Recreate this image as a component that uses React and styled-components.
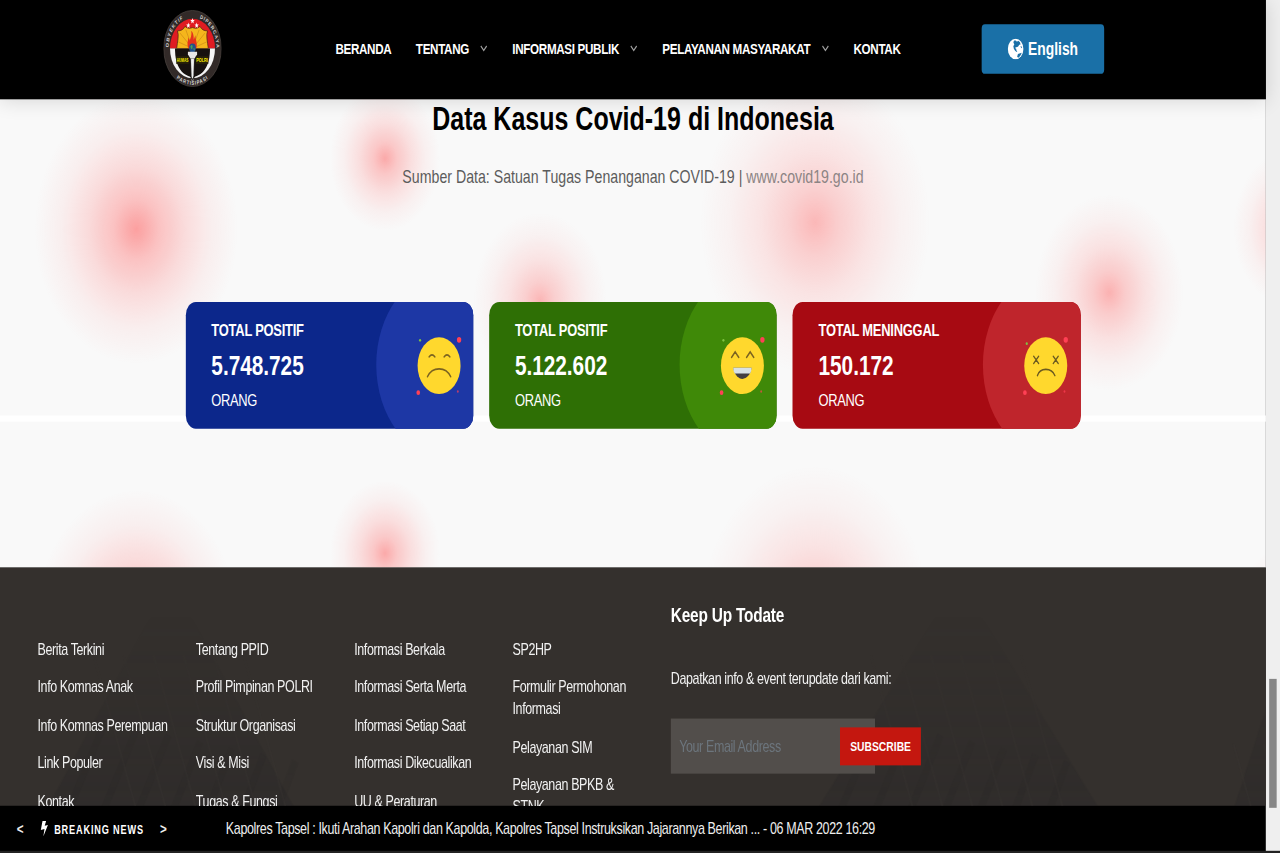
import React from "react";
import styled, { createGlobalStyle } from "styled-components";

const GlobalStyle = createGlobalStyle`
  *, *::before, *::after { box-sizing: border-box; }
  html, body { margin: 0; padding: 0; overflow: hidden; background: #222; }
  body { font-family: "Liberation Sans", Arial, sans-serif; }
`;

const Viewport = styled.div`
  width: 1280px;
  height: 853px;
  overflow: hidden;
`;

const Stage = styled.div`
  display: flex;
  width: 1536px;
  height: 774px;
  background: #222;
  transform: scale(0.83333, 1.10207);
  transform-origin: 0 0;
`;

const Page = styled.div`
  display: flex;
  flex-direction: column;
  flex: none;
  width: 1519.2px;
  height: 772.4px;
`;

const ScrollTrack = styled.div`
  flex: 1;
  height: 772.4px;
  padding: 616.3px 4px 0;
  background: #efefef;
`;

const ScrollThumb = styled.div`
  height: 116.5px;
  background: #868686;
`;

const Header = styled.header`
  position: relative;
  z-index: 2;
  display: flex;
  align-items: center;
  flex: none;
  height: 89.8px;
  padding: 0 194px 0 195.5px;
  background: #000;
  box-shadow: 0 2px 20px rgba(0, 0, 0, 0.14);
`;

const Logo = styled.svg`
  display: block;
  width: 70px;
  height: 70px;
  margin-bottom: 1px;
`;

const Nav = styled.nav`
  display: flex;
  align-items: center;
  gap: 29.4px;
  margin-left: 137px;
  padding-bottom: 1.6px;
`;

const NavItem = styled.a`
  display: flex;
  align-items: center;
  gap: 13.6px;
  color: #fff;
  font-size: 14px;
  font-weight: 700;
  line-height: 20px;
  letter-spacing: -0.41px;
  white-space: nowrap;

  svg { display: block; width: 9px; height: 8px; }
`;

const LanguageButton = styled.button`
  display: flex;
  align-items: center;
  justify-content: center;
  gap: 5px;
  width: 147.5px;
  height: 45.4px;
  margin: 0 0 1.4px auto;
  padding: 1px 0 0;
  border: 0;
  border-radius: 4px;
  background: #1a70a7;
  color: #fff;
  font: 700 16.6px/20px "Liberation Sans", Arial, sans-serif;

  svg { display: block; width: 19.5px; height: 19px; }
`;

const blob = (x, y, r, a) =>
  `radial-gradient(circle ${r}px at ${x}px ${y}px, rgba(255,50,50,${a}) 0%, rgba(255,62,62,${a * 0.66}) 22%, rgba(255,74,74,${a * 0.38}) 47%, rgba(255,84,84,${a * 0.14}) 74%, rgba(255,100,100,0) 100%)`;

const blobs = [
  [163.5, 118, 122, 0.45],
  [462, 53.6, 66, 0.4],
  [648, 183, 80, 0.34],
  [978, 112, 138, 0.33],
  [1331, 175.5, 89, 0.36],
  [1552, 117, 72, 0.36],
  [163.5, 476.4, 122, 0.45],
  [462, 412, 66, 0.4],
  [978, 470.4, 138, 0.33],
  [1552, 475.4, 72, 0.36],
];

const CovidSection = styled.section`
  display: flex;
  flex-direction: column;
  align-items: center;
  flex: none;
  height: 425px;
  background:
    linear-gradient(#fff, #fff) 0 286.8px / 100% 5.6px no-repeat,
    ${blobs.map((b) => blob(...b)).join(",")},
    #f9f9f9;
`;

const Title = styled.h2`
  margin: 0;
  color: #000;
  font-size: 30px;
  font-weight: 700;
  line-height: 36px;
`;

const Source = styled.p`
  margin: 23px 0 0;
  color: #5c5c5c;
  font-size: 17px;
  line-height: 24px;

  a { color: #8c8484; }
`;

const Cards = styled.div`
  display: flex;
  gap: 19px;
  margin-top: 101.5px;
`;

const Card = styled.article`
  position: relative;
  width: 345.3px;
  height: 115.2px;
  padding: 9.8px 31px 0;
  overflow: hidden;
  border-radius: 12px;
  background: ${(p) => p.$base};
  color: #fff;
`;

const CardArt = styled.svg`
  position: absolute;
  inset: 0;
  width: 345.5px;
  height: 115.5px;
`;

const CardLabel = styled.div`
  position: relative;
  font-size: 15.5px;
  font-weight: 700;
  line-height: 31.6px;
  letter-spacing: -0.28px;
`;

const CardValue = styled(CardLabel)`
  font-size: 25px;
  letter-spacing: -0.05px;
`;

const CardUnit = styled(CardLabel)`
  font-weight: 400;
  letter-spacing: -0.4px;
`;

const Footer = styled.footer`
  position: relative;
  display: flex;
  flex: none;
  height: 216.4px;
  padding-left: 45px;
  overflow: hidden;
  background: #34302d;
  color: #f2f2f2;
  font-size: 15px;
  line-height: 20px;
  letter-spacing: -0.47px;
`;

const FooterArt = styled.svg`
  position: absolute;
  inset: 0;
  width: 1519.2px;
  height: 216.7px;
`;

const LinkColumn = styled.div`
  position: relative;
  display: flex;
  flex-direction: column;
  gap: 14.45px;
  width: 190px;
  padding: 64.2px 35px 0 0;
`;

const FooterLink = styled.a`
  flex: none;
  white-space: ${(p) => (p.$wrap ? "normal" : "nowrap")};
`;

const Newsletter = styled.div`
  position: relative;
  padding-top: 30.8px;
`;

const NewsTitle = styled.h3`
  margin: 0;
  color: #fff;
  font-size: 18.5px;
  line-height: 24px;
  letter-spacing: -0.25px;
`;

const NewsText = styled.p`
  margin: 36px 0 26.3px;
`;

const Form = styled.form`
  display: flex;
  align-items: center;
`;

const EmailInput = styled.input`
  width: 245px;
  height: 50px;
  padding: 0 10px 1px;
  border: 0;
  background: #524e4b;
  font: 15px "Liberation Sans", Arial, sans-serif;
  letter-spacing: -0.47px;

  &::placeholder { color: #6c757d; opacity: 1; }
`;

const SubscribeButton = styled.button`
  width: 97.4px;
  height: 34.2px;
  margin: 0 0 0.6px -42px;
  padding: 0;
  border: 0;
  background: #c4170f;
  color: #fff;
  font: 700 12.4px "Liberation Sans", Arial, sans-serif;
  letter-spacing: 0;
`;

const Ticker = styled.div`
  display: flex;
  align-items: center;
  flex: 1;
  padding: 0.8px 0 0 20px;
  background: #000;
  color: #eee;
  font-size: 15px;
  line-height: 20px;
  letter-spacing: -0.435px;
`;

const Arrow = styled.span`
  width: 9px;
  font-size: 14px;
  font-weight: 700;
`;

const BreakingLabel = styled.span`
  display: flex;
  align-items: center;
  gap: 7px;
  width: 125px;
  margin: 0 19px;
  color: #fff;
  font-size: 11px;
  font-weight: 700;
  letter-spacing: 1px;
  white-space: nowrap;

  svg { display: block; width: 10px; height: 14px; }
  span { padding-top: 1px; }
`;

const Headline = styled.span`
  margin-left: 70px;
  white-space: nowrap;
`;

const Chevron = () => (
  <svg viewBox="0 0 9 8" fill="none" stroke="#a0a0a0" strokeWidth="1.3">
    <path d="M1 1.8 4.5 5.800 8 1.8" />
  </svg>
);

const Globe = () => (
  <svg viewBox="0 0 24 24">
    <circle cx="12" cy="12" r="11.800" fill="#fff" />
    <g fill="#1a70a7">
      <path d="M8.500 3.800 10.500 2l2.200.4 1.300 1.200 2-1.200 2.600 1.700.9 2.700-2 .2-1.700 2.200-2 .7-1.400-.3-1 1.500 1.500.7.300 1.800 1.300.8-.6 1-2.400-1.200-2.200-2.600-.8-3 1.500-1.500z" />
      <path d="M14.300 20.800l1.200-3 2.300-.6 3.400-.9c-.9 2.200-2.500 4.200-5.200 5.600z" />
      <path d="M19.500 8.600l1.600.4.6 2-1.500-.4z" />
    </g>
  </svg>
);

const Bolt = () => (
  <svg viewBox="0 0 10 14" fill="#fff">
    <path d="M3 0h4.300L5.700 4.300 9.500 3.500 4 14l1.400-6.800L1 8.200z" />
  </svg>
);

const CrestLogo = () => (
  <Logo viewBox="0 0 70 70">
    <defs>
      <clipPath id="inner"><circle cx="35" cy="35" r="27" /></clipPath>
      <path id="arcTop" d="M6.2 35a28.8 28.8 0 0 1 57.6 0" />
      <path id="arcLow" d="M2 35a33 33 0 0 0 66 0" />
    </defs>
    <circle cx="35" cy="35" r="34.5" fill="#322a28" stroke="#4a4340" strokeWidth=".8" />
    <g clipPath="url(#inner)">
      <rect width="70" height="35" fill="#e01b22" />
      <rect y="35" width="70" height="35" fill="#f5f5f5" />
      <path d="M14 35h42c0 14-6 24-21 26-15-2-21-12-21-26z" fill="#17110f" />
    </g>
    <path d="M17 19c4 0 7-1 9-4 3 2 6 2 9 1 3 1 6 1 9-1 2 3 5 4 9 4-2 4 0 10 1 16H16c1-6 3-12 1-16z" fill="#f5b61c" stroke="#3d2614" strokeWidth=".7" />
    <path d="M35 35 20 21M35 35 27 18M35 35l8-17M35 35l15-14M35 35 18 29M35 35l17-6" stroke="#b97812" strokeWidth=".5" />
    <g fill="#fff">
      {[[35, 10], [30, 14], [40, 14]].map(([x, y]) => (
        <path key={x} transform={`translate(${x} ${y})`} d="M0-2.6.7-.8 2.6-.8 1.1.4 1.6 2.3 0 1.2-1.6 2.3-1.1.4-2.6-.8-.7-.8z" />
      ))}
    </g>
    <path d="M30.500 35c-3-4-.5-7-.5-10 1 1 1.500 2 1.500 3 1-2 3-5 2-9 3 2 3 6 3 8l2-4c0 4 3 8 1 12z" fill="#e5311c" />
    <circle cx="35" cy="34.500" r="4" fill="#21508b" />
    <path d="M32.500 33c2-2 3-1 2.500 1s-2 2-2.500-1zM36 35c2-1 2 1 1 2z" fill="#4ca352" />
    <path d="M29.500 38h11v2.500l-3 3.500h-5l-3-3.500z" fill="#e8e8e8" />
    <path d="M33 44h4l-1 20h-2z" fill="#f2f2f2" stroke="#777" strokeWidth=".3" />
    <path d="M31 54c0 6 2 7 4 9 2-2 4-3 4-9" fill="none" stroke="#17110f" />
    <rect x="15.500" y="42" width="15" height="7" fill="#272009" />
    <rect x="39" y="42" width="15" height="7" fill="#272009" />
    <g fill="#fff200" fontSize="5.500" fontWeight="700">
      <text x="16" y="47.500" textLength="14" lengthAdjust="spacingAndGlyphs">HUMAS</text>
      <text x="39.500" y="47.500" textLength="14" lengthAdjust="spacingAndGlyphs">POLRI</text>
    </g>
    <g fill="#d8d8d8" fontSize="5" fontWeight="700">
      <text letterSpacing="1"><textPath href="#arcTop" startOffset="1">OBYEKTIF</textPath></text>
      <text letterSpacing=".9"><textPath href="#arcTop" startOffset="54">DIPERCAYA</textPath></text>
      <text letterSpacing=".9" textAnchor="middle"><textPath href="#arcLow" startOffset="50%">PARTISIPASI</textPath></text>
    </g>
  </Logo>
);

const faces = {
  sad: (
    <g fill="none" stroke="#7b6320" strokeWidth="1.500" strokeLinecap="round">
      <path d="M-12-8q3.500-3.600 7 0M6-8q3.500-3.600 7 0" />
      <path d="M-14 10C-8 .500 8 .500 14 10" />
    </g>
  ),
  happy: (
    <g>
      <path d="M-13-7.500-8.700-12.500-4.400-7.500M5-7.500 9.300-12.500 13.600-7.500" fill="none" stroke="#7b6320" strokeWidth="1.600" strokeLinecap="round" />
      <path d="M-11 2h22C10 8 5 12 0 12S-10 8-11 2z" fill="#423f42" />
      <path d="M-11 2h22q0 3-1.800 5H-9.200Q-11 5-11 2z" fill="#d8e2e5" />
    </g>
  ),
  dead: (
    <g fill="none" stroke="#6b5a20" strokeWidth="1.500" strokeLinecap="round">
      <path d="M-14.500-8.500-8.500-2M-8.500-8.500-14.500-2M9-8.500 15-2M15-8.500 9-2" />
      <path d="M-10 9C-7 1.500 7 1.500 11 9" />
    </g>
  ),
};

const CardGraphic = ({ tint, face }) => (
  <CardArt viewBox="0 0 345.5 115.5">
    <circle cx="313" cy="57" r="84.500" fill={tint} />
    <g transform="translate(303.900 57.800)">
      <circle r="25.800" fill="#ffd82d" />
      {faces[face]}
      <g fill="#ff4055">
        <circle cx="24" cy="-23.500" r="2.600" />
        <circle cx="-25" cy="24.500" r="2.200" />
        <circle cx="22.500" cy="23.500" r="1.100" opacity=".7" />
      </g>
      <circle cx="-22.800" cy={face === "dead" ? -20 : -23} r="1.300" fill="#7fc241" />
    </g>
  </CardArt>
);

/* Faint lattice towers behind the footer links. */
const Tower = ({ x, y, w }) => (
  <g transform={`translate(${x} ${y})`}>
    <path d={`M0 0 ${-w} 260H${w}z`} fill="#202022" opacity=".2" />
    <g stroke="#1f1f20" strokeWidth="8" opacity=".1">
      {[0, 1, 2, 3, 4, 5, 6].map((i) => (
        <path key={i} d={`M${-w * 0.75 + i * 42} 240l${60 - i * 4}-${110 - i * 6}`} />
      ))}
    </g>
    <g stroke="#45403d" strokeWidth="1.500" opacity=".25">
      {[0, 1, 2, 3, 4, 5].map((i) => (
        <path key={i} d={`M${-w * 0.5 + i * 36} 70l62 170`} />
      ))}
    </g>
  </g>
);

const FooterBackdrop = () => (
  <FooterArt viewBox="0 0 1519 216.7" preserveAspectRatio="none">
    <defs>
      <linearGradient id="fade" x2="0" y2="1">
        <stop offset=".2" stopColor="#fff" stopOpacity="0" />
        <stop offset="1" stopColor="#fff" />
      </linearGradient>
      <mask id="fadeMask" maskUnits="userSpaceOnUse" x="0" y="0" width="1519" height="217">
        <rect width="1519" height="217" fill="url(#fade)" />
      </mask>
    </defs>
    <g mask="url(#fadeMask)">
      <Tower x={205} y={10} w={185} />
      <Tower x={1150} y={10} w={210} />
      <Tower x={1535} y={90} w={110} />
    </g>
  </FooterArt>
);

const menu = [
  ["BERANDA", false],
  ["TENTANG", true],
  ["INFORMASI PUBLIK", true],
  ["PELAYANAN MASYARAKAT", true],
  ["KONTAK", false],
];

const stats = [
  { label: "TOTAL POSITIF", value: "5.748.725", base: "#0c278b", tint: "#1d37a5", face: "sad" },
  { label: "TOTAL POSITIF", value: "5.122.602", base: "#2e6f05", tint: "#3f8908", face: "happy" },
  { label: "TOTAL MENINGGAL", value: "150.172", base: "#a70a12", tint: "#bf252c", face: "dead" },
];

const columns = [
  ["Berita Terkini", "Info Komnas Anak", "Info Komnas Perempuan", "Link Populer", "Kontak"],
  ["Tentang PPID", "Profil Pimpinan POLRI", "Struktur Organisasi", "Visi & Misi", "Tugas & Fungsi"],
  ["Informasi Berkala", "Informasi Serta Merta", "Informasi Setiap Saat", "Informasi Dikecualikan", "UU & Peraturan"],
  ["SP2HP", "Formulir Permohonan Informasi", "Pelayanan SIM", "Pelayanan BPKB & STNK"],
];

export default function App() {
  return (
    <Viewport>
      <GlobalStyle />
      <Stage>
        <Page>
          <Header>
            <CrestLogo />
            <Nav>
              {menu.map(([label, hasMenu]) => (
                <NavItem key={label}>
                  {label}
                  {hasMenu && <Chevron />}
                </NavItem>
              ))}
            </Nav>
            <LanguageButton>
              <Globe />
              English
            </LanguageButton>
          </Header>
          <CovidSection>
            <Title>Data Kasus Covid-19 di Indonesia</Title>
            <Source>
              Sumber Data: Satuan Tugas Penanganan COVID-19 | <a>www.covid19.go.id</a>
            </Source>
            <Cards>
              {stats.map((s) => (
                <Card key={s.value} $base={s.base}>
                  <CardGraphic tint={s.tint} face={s.face} />
                  <CardLabel>{s.label}</CardLabel>
                  <CardValue>{s.value}</CardValue>
                  <CardUnit>ORANG</CardUnit>
                </Card>
              ))}
            </Cards>
          </CovidSection>
          <Footer>
            <FooterBackdrop />
            {columns.map((links) => (
              <LinkColumn key={links[0]}>
                {links.map((l) => (
                  <FooterLink key={l} $wrap={links[0] === "SP2HP"}>{l}</FooterLink>
                ))}
              </LinkColumn>
            ))}
            <Newsletter>
              <NewsTitle>Keep Up Todate</NewsTitle>
              <NewsText>Dapatkan info &amp; event terupdate dari kami:</NewsText>
              <Form>
                <EmailInput placeholder="Your Email Address" />
                <SubscribeButton type="button">SUBSCRIBE</SubscribeButton>
              </Form>
            </Newsletter>
          </Footer>
          <Ticker>
            <Arrow>&lt;</Arrow>
            <BreakingLabel>
              <Bolt />
              <span>BREAKING NEWS</span>
            </BreakingLabel>
            <Arrow>&gt;</Arrow>
            <Headline>
              Kapolres Tapsel : Ikuti Arahan Kapolri dan Kapolda, Kapolres Tapsel Instruksikan Jajarannya Berikan ... - 06 MAR 2022 16:29
            </Headline>
          </Ticker>
        </Page>
        <ScrollTrack>
          <ScrollThumb />
        </ScrollTrack>
      </Stage>
    </Viewport>
  );
}
